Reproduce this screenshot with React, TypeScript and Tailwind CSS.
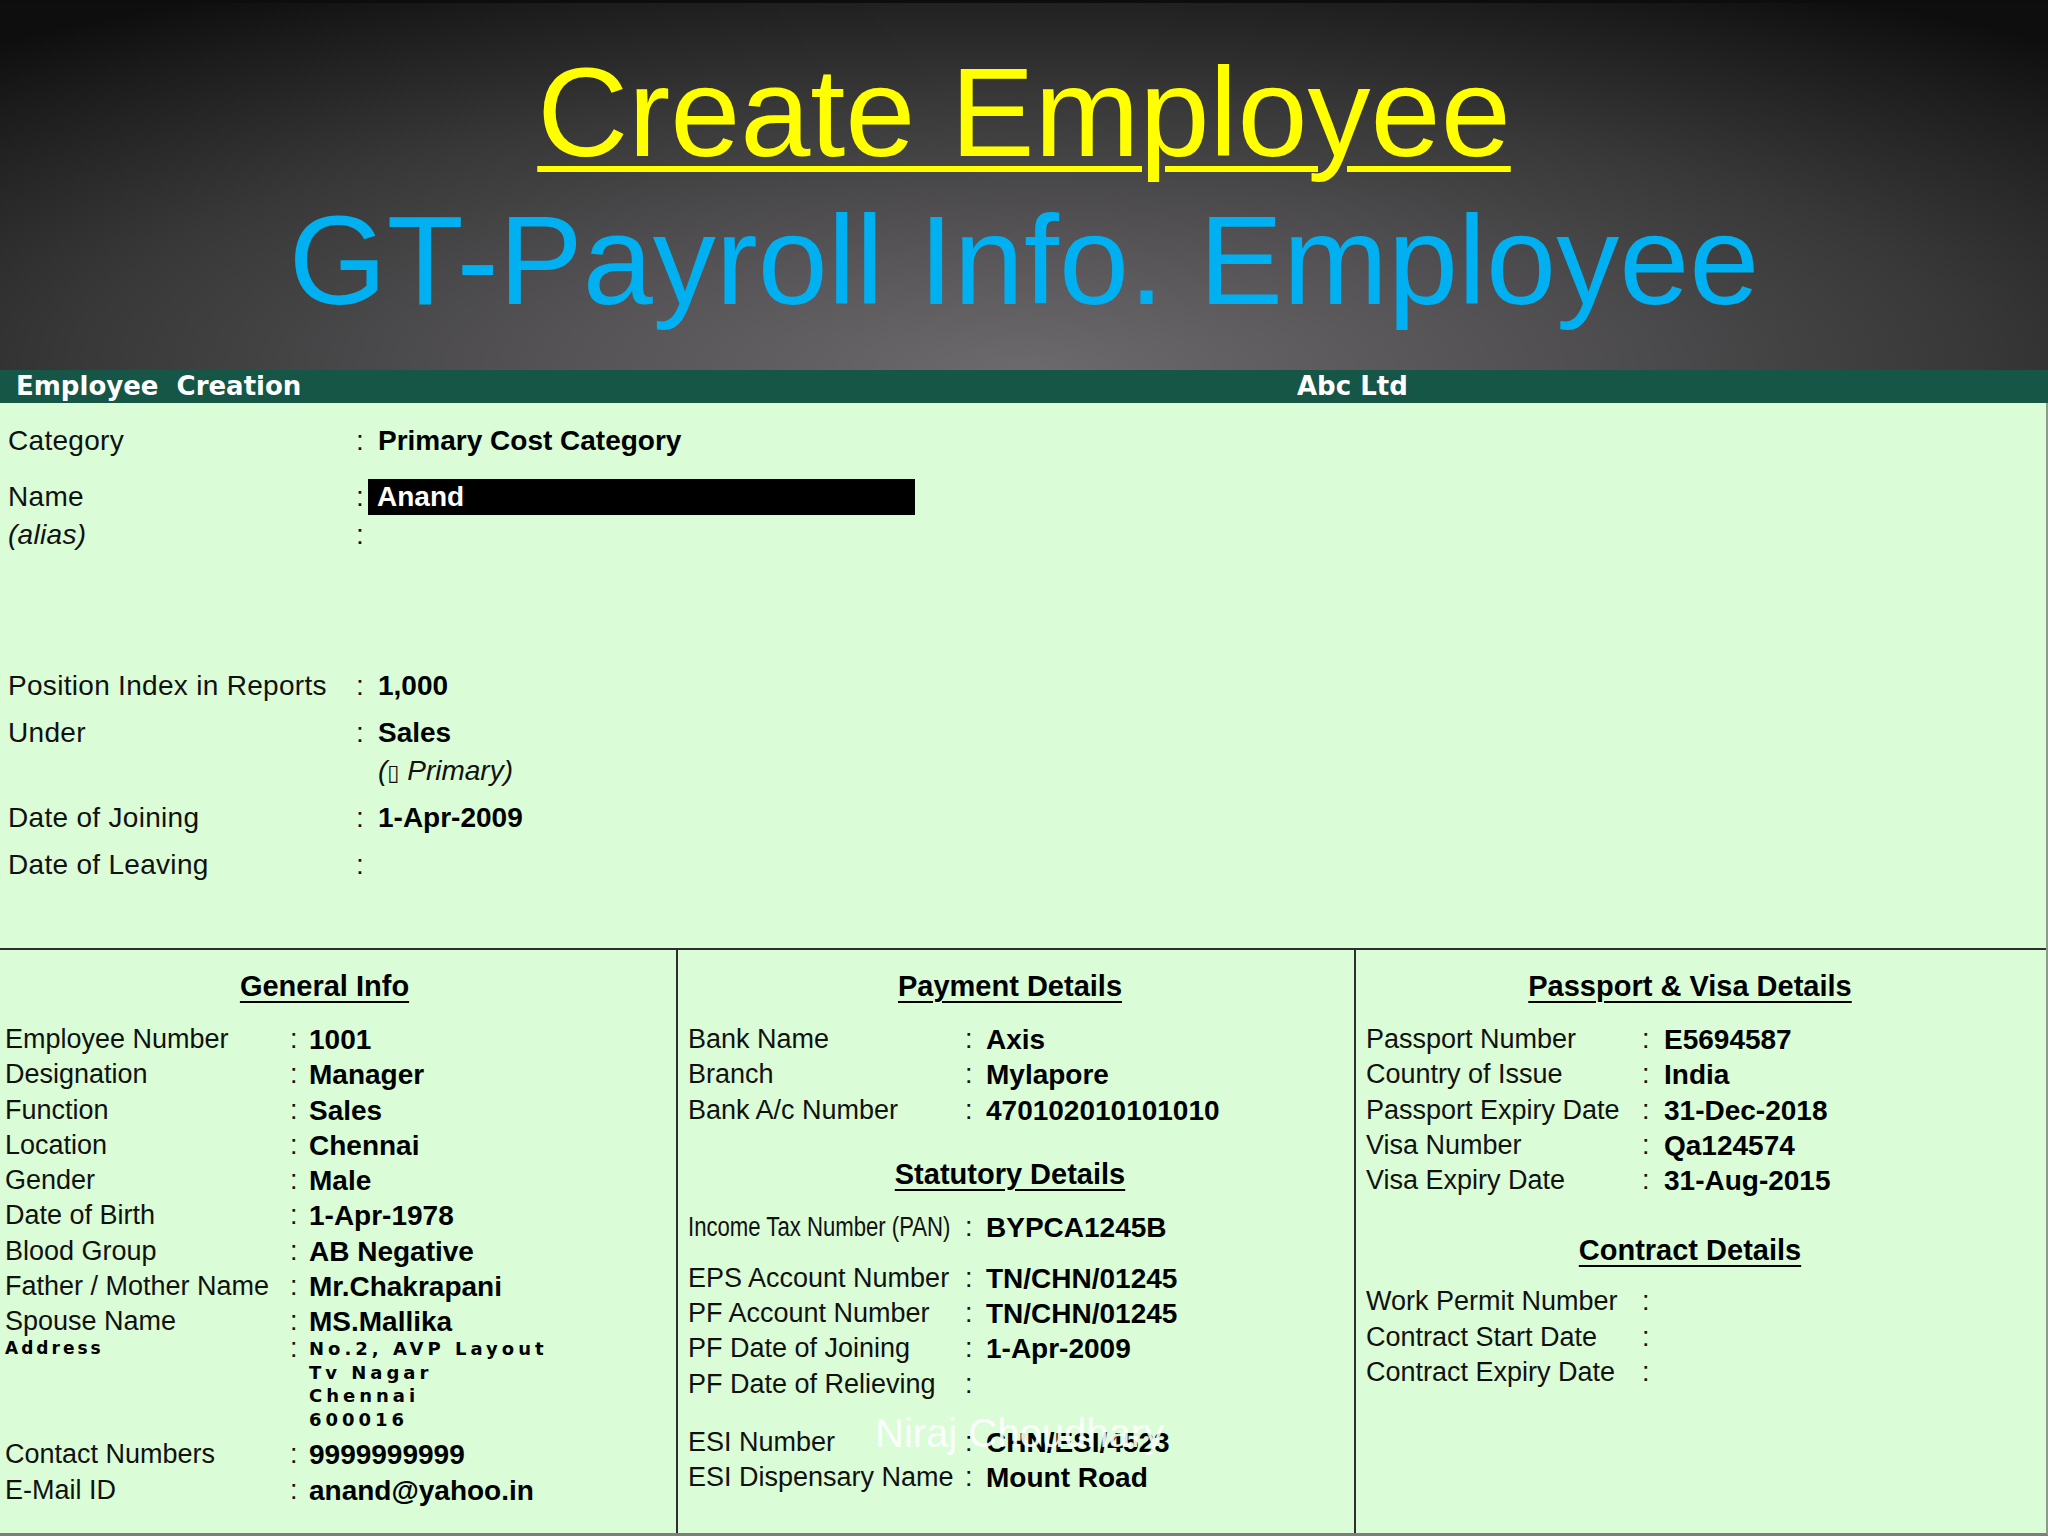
import React from 'react';

type Pair = [string, string?];

const sans = "font-['Liberation_Sans',Arial,sans-serif]";
const tally = "font-['DejaVu_Sans',Verdana,sans-serif]";

const generalInfo: Pair[] = [
  ['Employee Number', '1001'],
  ['Designation', 'Manager'],
  ['Function', 'Sales'],
  ['Location', 'Chennai'],
  ['Gender', 'Male'],
  ['Date of Birth', '1-Apr-1978'],
  ['Blood Group', 'AB Negative'],
  ['Father / Mother Name', 'Mr.Chakrapani'],
  ['Spouse Name', 'MS.Mallika'],
];

const bankRows: Pair[] = [
  ['Bank Name', 'Axis'],
  ['Branch', 'Mylapore'],
  ['Bank A/c Number', '470102010101010'],
];

const pfRows: Pair[] = [
  ['EPS Account Number', 'TN/CHN/01245'],
  ['PF Account Number', 'TN/CHN/01245'],
  ['PF Date of Joining', '1-Apr-2009'],
  ['PF Date of Relieving'],
];

const esiRows: Pair[] = [
  ['ESI Number', 'CHN/ESI/4523'],
  ['ESI Dispensary Name', 'Mount Road'],
];

const passportRows: Pair[] = [
  ['Passport Number', 'E5694587'],
  ['Country of Issue', 'India'],
  ['Passport Expiry Date', '31-Dec-2018'],
  ['Visa Number', 'Qa124574'],
  ['Visa Expiry Date', '31-Aug-2015'],
];

const contractRows: Pair[] = [
  ['Work Permit Number'],
  ['Contract Start Date'],
  ['Contract Expiry Date'],
];

// label / colon / value rows of the lower three panels
const FieldRows = ({ rows, cols }: { rows: Pair[]; cols: string }) => (
  <div className="flex flex-col">
    {rows.map(([label, value]) => (
      <div key={label} className={`grid ${cols} h-[35.25px] items-center leading-[35.25px]`}>
        <span className="whitespace-nowrap text-[27px] text-[#111]">{label}</span>
        <span className="text-[27px] text-[#111]">:</span>
        <span className="whitespace-nowrap text-[28px] font-bold text-black">{value}</span>
      </div>
    ))}
  </div>
);

const SectionTitle = ({ children, className }: { children: React.ReactNode; className: string }) => (
  <div className={`h-[36px] text-center text-[29px] leading-[36px] font-bold text-black ${className}`}>
    <span className="underline decoration-2 underline-offset-[5px]">{children}</span>
  </div>
);

const UpperRow = ({ label, children, italic }: { label: string; children?: React.ReactNode; italic?: boolean }) => (
  <div className="grid h-[36px] grid-cols-[348px_22px_1fr] items-center leading-[36px]">
    <span className={`whitespace-nowrap text-[28px] tracking-[0.3px] text-[#111] ${italic ? 'italic' : ''}`}>{label}</span>
    <span className="text-[28px] text-[#111]">:</span>
    <div className="text-[28px] font-bold text-black">{children}</div>
  </div>
);

export default function App() {
  const col1 = 'grid-cols-[285px_19px_1fr]';
  const col2 = 'grid-cols-[277px_21px_1fr]';
  const col3 = 'grid-cols-[276px_22px_1fr]';

  return (
    <div className={`flex h-[1536px] w-[2048px] flex-col overflow-hidden bg-black ${sans}`}>
      {/* slide title */}
      <div className="flex h-[370px] flex-col items-center border-t-[3px] border-[#0d0d0d] bg-[radial-gradient(ellipse_75%_120%_at_50%_100%,#6d6a6d_0%,#555356_30%,#383838_62%,#1c1c1c_88%,#0e0e0e_100%)] pt-[47px]">
        <div className="h-[126px] text-[126px] leading-[126px] text-[#ffff00] underline decoration-[6px] underline-offset-[10px]">
          Create Employee
        </div>
        <div className="mt-[22px] h-[126px] text-[126px] leading-[126px] text-[#00b0f0]">GT-Payroll Info. Employee</div>
      </div>

      {/* tally title bar */}
      <div className={`flex h-[33px] items-center bg-[#155647] text-[26px] leading-[33px] font-bold text-white ${tally}`}>
        <span className="w-[1297px] whitespace-pre pl-[16px]">Employee  Creation</span>
        <span>Abc Ltd</span>
      </div>

      <div className="flex flex-1 flex-col border-r-2 border-b-[3px] border-r-[#8c9a8c] border-b-[#7d7d7d] bg-[#dafcd6]">
        {/* upper form */}
        <div className="flex h-[547px] flex-col border-b-2 border-[#2e2e2e] pt-[20px] pl-[8px]">
          <UpperRow label="Category">Primary Cost Category</UpperRow>
          <div className="mt-[20px]">
            <UpperRow label="Name">
              <div className="-ml-[10px] w-[547px] bg-black pl-[9px] text-white">Anand</div>
            </UpperRow>
          </div>
          <div className="mt-[2px]">
            <UpperRow label="(alias)" italic />
          </div>
          <div className="mt-[115px]">
            <UpperRow label="Position Index in Reports">1,000</UpperRow>
          </div>
          <div className="mt-[11px]">
            <UpperRow label="Under">Sales</UpperRow>
          </div>
          <div className="mt-[2px] h-[36px] pl-[370px] text-[28px] leading-[36px] text-[#111] italic">
            (<span className="font-['DejaVu_Sans'] text-[22px] not-italic">▯</span> Primary)
          </div>
          <div className="mt-[11px]">
            <UpperRow label="Date of Joining">1-Apr-2009</UpperRow>
          </div>
          <div className="mt-[11px]">
            <UpperRow label="Date of Leaving" />
          </div>
        </div>

        {/* lower panels */}
        <div className="flex flex-1">
          <div className="flex w-[678px] flex-col border-r-2 border-[#2e2e2e] pt-[18px] pl-[5px]">
            <SectionTitle className="pr-[32px]">General Info</SectionTitle>
            <div className="mt-[18px]">
              <FieldRows rows={generalInfo} cols={col1} />
            </div>
            <div className={`-mt-[2px] grid ${col1} leading-[23.5px]`}>
              <span className={`text-[17px] font-bold tracking-[3px] text-black ${tally}`}>Address</span>
              <span className="text-[27px] leading-[23.5px] text-[#111]">:</span>
              <div className={`text-[18px] font-bold tracking-[4px] text-black ${tally}`}>
                <div>No.2, AVP Layout</div>
                <div>Tv Nagar</div>
                <div>Chennai</div>
                <div>600016</div>
              </div>
            </div>
            <div className="mt-[6px]">
              <FieldRows
                rows={[
                  ['Contact Numbers', '9999999999'],
                  ['E-Mail ID', 'anand@yahoo.in'],
                ]}
                cols={col1}
              />
            </div>
          </div>

          <div className="relative flex w-[678px] flex-col border-r-2 border-[#2e2e2e] pt-[18px] pl-[10px]">
            <SectionTitle className="pr-[22px]">Payment Details</SectionTitle>
            <div className="mt-[18px]">
              <FieldRows rows={bankRows} cols={col2} />
            </div>
            <SectionTitle className="mt-[28px] pr-[22px]">Statutory Details</SectionTitle>
            <div className={`mt-[18px] grid ${col2} h-[35px] items-center leading-[35px]`}>
              <span className="inline-block origin-left scale-x-[0.82] whitespace-nowrap text-[27px] text-[#111]">
                Income Tax Number (PAN)
              </span>
              <span className="text-[27px] text-[#111]">:</span>
              <span className="text-[28px] font-bold text-black">BYPCA1245B</span>
            </div>
            <div className="mt-[16px]">
              <FieldRows rows={pfRows} cols={col2} />
            </div>
            <div className="mt-[23px]">
              <FieldRows rows={esiRows} cols={col2} />
            </div>
            {/* watermark lying over the ESI row */}
            <div className="absolute top-[463px] left-[197px] text-[40px] leading-[40px] whitespace-nowrap text-white/90">
              Niraj Choudhary
            </div>
          </div>

          <div className="flex flex-1 flex-col pt-[18px] pl-[10px]">
            <SectionTitle className="pr-[32px]">Passport &amp; Visa Details</SectionTitle>
            <div className="mt-[18px]">
              <FieldRows rows={passportRows} cols={col3} />
            </div>
            <SectionTitle className="mt-[34px] pr-[32px]">Contract Details</SectionTitle>
            <div className="mt-[16px]">
              <FieldRows rows={contractRows} cols={col3} />
            </div>
          </div>
        </div>
      </div>
    </div>
  );
}
